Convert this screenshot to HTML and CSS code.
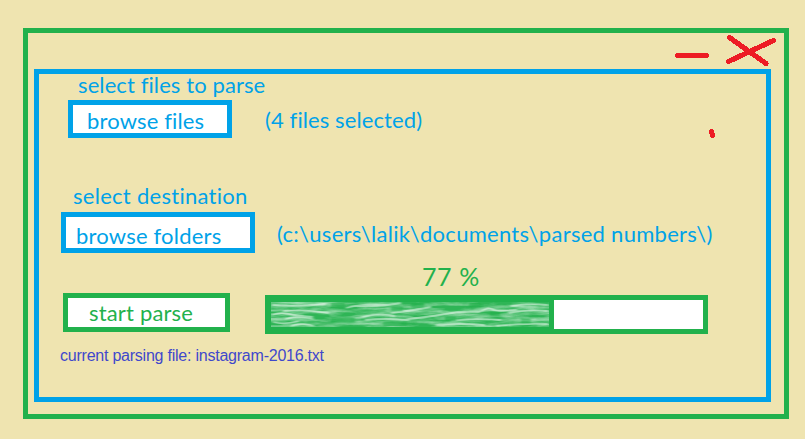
FILE: index.html
```
<!DOCTYPE html>
<html lang="en">
<head>
<meta charset="utf-8">
<title>File parser</title>
<link rel="stylesheet" href="styles.css">
</head>
<body>
<main class="window">
  <header class="titlebar">
    <svg class="controls" width="110" height="36" viewBox="674 33 110 36" shape-rendering="crispEdges">
      <path d="M677.5 55.500H706.500M729.500 37.500L766 63.500M773.500 40.500L728.500 61.500"/>
    </svg>
  </header>
  <section class="panel">
    <div class="label label-files"><span>select files to parse</span></div>
    <div class="row row-files">
      <button class="btn btn-files"><span>browse files</span></button>
      <span class="text count">(4 files selected)</span>
    </div>
    <div class="label label-dest"><span>select destination</span></div>
    <div class="row row-dest">
      <button class="btn btn-folders"><span>browse folders</span></button>
      <span class="text path">(c:\users\lalik\documents\parsed numbers\)</span>
    </div>
    <div class="percent"><span>77 %</span></div>
    <div class="row row-parse">
      <button class="btn btn-start"><span>start parse</span></button>
      <div class="progress">
        <div class="fill">
          <svg width="278" height="25" viewBox="0 0 278 25">
            <filter id="grain" x="0" y="0" width="100%" height="100%" color-interpolation-filters="sRGB">
              <feTurbulence type="fractalNoise" baseFrequency="0.030 0.250" numOctaves="4" seed="8"/>
              <feColorMatrix values="0 0 0 0 1  0 0 0 0 1  0 0 0 0 1  1.100 0 0 0 -0.360"/>
            </filter>
            <filter id="soft"><feGaussianBlur stdDeviation="1.500 0.700"/></filter>
            <rect width="278" height="25" fill="#fff" opacity=".06"/>
            <rect width="278" height="25" filter="url(#grain)"/>
            <g class="strokes" filter="url(#soft)">
              <path d="M1 13Q8 10 18 12T42 15M14 17Q28 13 42 17M20 24Q30 20 43 24M2 20Q14 23 28 19M1 3Q25 5 55 2M12 9Q35 7 58 11"/>
              <path d="M75 6Q92 1 119 3M86 4Q105 5 130 1M91 15Q108 11 124 14M94 18Q112 16 138 18M120 11Q140 9 160 5"/>
              <path d="M136 17Q158 15 174 12T208 10L217 6L227 9L246 8M180 19Q205 16 230 18M225 24Q251 21 277 22M240 4Q257 1 277 3M237 11Q255 7 277 9M165 23Q190 21 214 23"/>
            </g>
            <path class="gaps" filter="url(#soft)" d="M60 3H74M60 18H84M140 3H153M198 3H210M174 17H185M219 12H229M250 19H260M120 7H132M112 22H136"/>
          </svg>
        </div>
      </div>
    </div>
    <p class="status"><span>current parsing file: instagram-2016.txt</span></p>
    <svg class="mark" width="8" height="12" viewBox="708 127 8 12" shape-rendering="crispEdges"><path d="M711.500 131.500L712.500 135.500"/></svg>
  </section>
</main>
</body>
</html>
```
FILE: styles.css
```
* { box-sizing: border-box; }
body {
  margin: 0;
  height: 439px;
  padding: 28px 16px 20px 23px;
  overflow: hidden;
  background: #efe4b0;
  color: #00a2e8;
  font: 22px/21px Lato, "Open Sans", sans-serif;
  white-space: nowrap;
}
.window { height: 391px; border: 5px solid #22b14c; }
.titlebar { display: flex; justify-content: flex-end; height: 36px; }
.controls { display: block; }
.controls path, .mark path { fill: none; stroke: #ed1c24; stroke-width: 5.2; stroke-linecap: round; }
.panel {
  position: relative;
  height: 333px;
  margin: 0 13px 0 6px;
  border: 5px solid #00a2e8;
}
.row { display: flex; align-items: flex-start; }
.btn {
  flex: none;
  padding: 0;
  border: 5px solid #00a2e8;
  background: #fff;
  color: inherit;
  font: inherit;
  text-align: left;
  display: flex;
  align-items: flex-start;
}
.label-files { padding-left: 39px; height: 26px; letter-spacing: .1px; }
.row-files { padding-left: 29px; height: 85px; }
.btn-files { width: 164px; height: 38px; padding: 5px 0 0 14px; letter-spacing: .15px; }
.count { margin: 9px 0 0 33px; letter-spacing: .1px; }
.label-dest { padding-left: 34px; height: 27px; letter-spacing: .28px; }
.row-dest { padding-left: 22px; height: 53px; }
.btn-folders { width: 194px; height: 41px; padding: 8px 0 0 10px; letter-spacing: .2px; }
.path { margin: 11px 0 0 22px; letter-spacing: .28px; }
.percent { padding: 1px 0 0 383px; height: 28px; font-size: 25px; letter-spacing: .6px; color: #22b14c; }
.row-parse { padding-left: 24px; height: 54px; color: #22b14c; }
.btn-start { width: 167px; height: 39px; padding: 4px 0 0 21px; border-color: #22b14c; letter-spacing: .17px; }
.progress {
  width: 443px;
  height: 39px;
  margin: 2px 0 0 35px;
  border: 5px solid #22b14c;
  background: #fff;
}
.fill { width: 284px; height: 29px; padding: 2px 5px 2px 1px; background: #22b14c; }
.fill svg { display: block; }
.strokes { fill: none; stroke: #fff; stroke-width: 1.8; opacity: .5; }
.gaps { stroke: #22b14c; stroke-width: 5; opacity: .6; }
.status { margin: 0; padding-left: 21px; font: 16px/18px "Liberation Sans", Arial, sans-serif; letter-spacing: -.23px; color: #3f48cc; }
.mark { position: absolute; left: 669px; top: 53px; }
```
